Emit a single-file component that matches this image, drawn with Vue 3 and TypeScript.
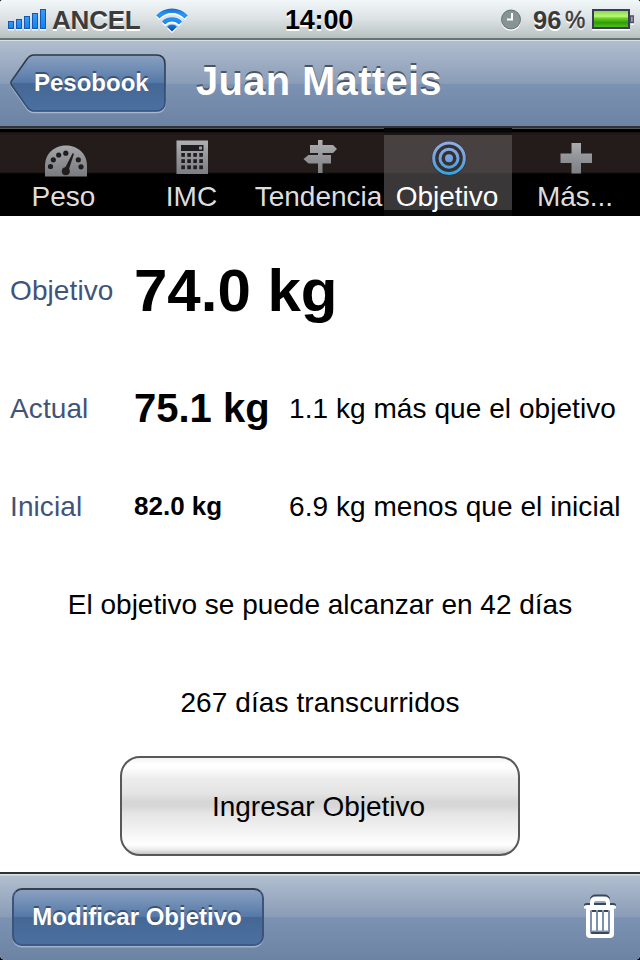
<script setup lang="ts">
interface Tab {
  id: string
  label: string
}

interface Measure {
  label: string
  value: string
  size: string
  note?: string
}

const tabs: Tab[] = [
  { id: 'peso', label: 'Peso' },
  { id: 'imc', label: 'IMC' },
  { id: 'tendencia', label: 'Tendencia' },
  { id: 'objetivo', label: 'Objetivo' },
  { id: 'mas', label: 'Más...' },
]
const selected = 'objetivo'

const measures: Measure[] = [
  { label: 'Objetivo', value: '74.0 kg', size: 'large' },
  { label: 'Actual', value: '75.1 kg', size: 'medium', note: '1.1 kg más que el objetivo' },
  { label: 'Inicial', value: '82.0 kg', size: 'small', note: '6.9 kg menos que el inicial' },
]

const messages: string[] = ['El objetivo se puede alcanzar en 42 días', '267 días transcurridos']

const bars = [7, 9, 12, 15, 19]
const dots: [number, number][] = [
  [50.5, 38.5], [53.3, 31.8], [58.7, 27], [65.8, 25.2], [78.3, 31.8], [81, 38.8],
]
</script>

<template>
  <div class="screen">
    <header class="status">
      <div class="status-left">
        <svg class="signal" width="42" height="24" viewBox="0 0 42 24">
          <defs>
            <linearGradient id="sig" x1="0" y1="0" x2="0" y2="1">
              <stop offset="0" stop-color="#3c9cf2" />
              <stop offset="1" stop-color="#0b84f4" />
            </linearGradient>
          </defs>
          <rect v-for="(h, i) in bars" :key="'s' + i" :x="i * 8" y="20" width="6" height="2.4" fill="#fff" />
          <rect v-for="(h, i) in bars" :key="i" :x="i * 8 + 0.5" :y="20.5 - h" width="5" :height="h" fill="url(#sig)" stroke="#1656b4" />
        </svg>
        <span class="carrier">ANCEL</span>
        <svg class="wifi" width="34" height="26" viewBox="0 0 34 26">
          <defs>
            <linearGradient id="wf" gradientUnits="userSpaceOnUse" x1="0" y1="0" x2="0" y2="24">
              <stop offset="0" stop-color="#1466c6" />
              <stop offset="0.25" stop-color="#2a95f4" />
              <stop offset="0.65" stop-color="#158cf6" />
              <stop offset="1" stop-color="#0939a5" />
            </linearGradient>
            <path id="wifi-shape" d="M1.2 7.2A22 22 0 0 1 32.8 7.2L29.6 10.4A17.4 17.4 0 0 0 4.4 10.4ZM7 13.4A14 14 0 0 1 27 13.4L24 16.6A9.6 9.6 0 0 0 10 16.6ZM12 18.8A6.8 6.8 0 0 1 22 18.8L17 23.4Z" />
          </defs>
          <use href="#wifi-shape" y="1.6" fill="#fff" />
          <use href="#wifi-shape" fill="url(#wf)" />
        </svg>
      </div>
      <span class="time">14:00</span>
      <div class="status-right">
        <svg class="clock" width="22" height="22" viewBox="0 0 22 22">
          <circle cx="11" cy="12" r="9.8" fill="#fff" />
          <circle cx="11" cy="10.5" r="9.5" fill="#879494" stroke="#66706f" />
          <path d="M12 4V10.5H7" fill="none" stroke="#fff" stroke-width="2" />
        </svg>
        <span class="charge">96</span>
        <span class="percent">%</span>
        <svg class="battery" width="43" height="23" viewBox="0 0 43 23">
          <defs>
            <linearGradient id="bat" x1="0" y1="0" x2="0" y2="1">
              <stop offset="0" stop-color="#7ed73b" />
              <stop offset="0.35" stop-color="#b9f77d" />
              <stop offset="0.45" stop-color="#6fd322" />
              <stop offset="0.7" stop-color="#2f9c0a" />
              <stop offset="1" stop-color="#58c81c" />
            </linearGradient>
          </defs>
          <path d="M0 20.8H38" stroke="#fff" stroke-width="1.6" />
          <path d="M39 15.2H42" stroke="#fff" stroke-width="1.6" />
          <rect x="1" y="1" width="36" height="18" fill="url(#bat)" stroke="#3a3b58" stroke-width="2" />
          <rect x="38.6" y="7" width="2.6" height="6.4" fill="#c7ced4" stroke="#4e506a" stroke-width="1.5" />
        </svg>
      </div>
    </header>

    <nav class="navbar">
      <button class="back">
        <svg class="back-shape" width="160" height="62" viewBox="0 0 160 62">
          <defs>
            <linearGradient id="bk" x1="0" y1="0" x2="0" y2="1">
              <stop offset="0" stop-color="#8aa1c1" />
              <stop offset="0.5" stop-color="#5578a8" />
              <stop offset="0.51" stop-color="#456795" />
              <stop offset="1" stop-color="#4b70a0" />
            </linearGradient>
            <linearGradient id="bk-edge" x1="0" y1="0" x2="0" y2="1">
              <stop offset="0" stop-color="#2d3642" />
              <stop offset="1" stop-color="#34547f" />
            </linearGradient>
            <path id="back-path" d="M24 1H146Q155 1 155 10V48Q155 57 146 57H24Q20 57 17 53L1.5 31Q0.3 29 1.5 27L17 5Q20 1 24 1Z" />
          </defs>
          <use href="#back-path" y="1.6" fill="none" stroke="#a9b8cd" stroke-width="1.5" />
          <use href="#back-path" fill="url(#bk)" stroke="url(#bk-edge)" stroke-width="1.6" />
        </svg>
        <span class="back-label">Pesobook</span>
      </button>
      <h1 class="title">Juan Matteis</h1>
    </nav>

    <div class="tabs">
      <div v-for="tab in tabs" :key="tab.id" class="tab" :class="{ active: tab.id === selected }">
        <svg class="tab-icon" width="128" height="50" viewBox="0 0 128 50">
          <defs>
            <linearGradient :id="'g-' + tab.id" gradientUnits="userSpaceOnUse" x1="0" y1="12" x2="0" y2="48">
              <stop offset="0" :stop-color="tab.id === selected ? '#92aee6' : '#b0b1b5'" />
              <stop offset="0.45" :stop-color="tab.id === selected ? '#7ba2df' : '#95969a'" />
              <stop offset="1" :stop-color="tab.id === selected ? '#2ea2e4' : '#7b7c81'" />
            </linearGradient>
          </defs>
          <template v-if="tab.id === 'peso'">
            <path d="M45 48.5V38C45 10.5 87 10.5 87 38V48.5Z" :fill="`url(#g-${tab.id})`" />
            <circle v-for="(d, i) in dots" :key="i" :cx="d[0]" :cy="d[1]" r="2.6" fill="#211c1d" />
            <circle cx="65.8" cy="43.2" r="4" fill="#211c1d" />
            <path d="M64.5 41L72.6 25.2L74 25.8L68.7 42Z" fill="#211c1d" />
          </template>
          <template v-else-if="tab.id === 'imc'">
            <rect x="48.5" y="12.5" width="31.5" height="33.5" :fill="`url(#g-${tab.id})`" />
            <rect x="53" y="17" width="22.5" height="6" fill="#211c1d" />
            <rect x="71" y="18.5" width="3" height="3" fill="#9b9ca0" />
            <template v-for="r in 3" :key="r">
              <rect v-for="c in 4" :key="c" :x="47.3 + c * 6" :y="18.8 + r * 6.2" width="3.6" height="3.8" fill="#211c1d" />
            </template>
          </template>
          <path v-else-if="tab.id === 'tendencia'" d="M62 12H66.5V17H77L81 21L77 25H66.5V27H75V35.5H66.5V45H62V35.5H52.5L47.5 31L52.5 27H62V25H54V17H62Z" :fill="`url(#g-${tab.id})`" />
          <template v-else-if="tab.id === 'objetivo'">
            <circle cx="65" cy="30.5" r="17.5" fill="#343131" />
            <g fill="none" :stroke="`url(#g-${tab.id})`" stroke-width="3">
              <circle cx="65" cy="30.2" r="15.3" />
              <circle cx="65" cy="30.2" r="9" />
            </g>
            <circle cx="65" cy="30.2" r="4" :fill="`url(#g-${tab.id})`" />
          </template>
          <path v-else d="M59.5 15H69V25.5H80V35H69V45.5H59.5V35H48.5V25.5H59.5Z" :fill="`url(#g-${tab.id})`" />
        </svg>
        <span class="tab-label" :class="'label-' + tab.id">{{ tab.label }}</span>
      </div>
    </div>

    <main class="content">
      <section v-for="m in measures" :key="m.label" class="row" :class="'row-' + m.size">
        <span class="label">{{ m.label }}</span>
        <strong class="value" :class="m.size">{{ m.value }}</strong>
        <span v-if="m.note" class="note">{{ m.note }}</span>
      </section>
      <p v-for="(t, i) in messages" :key="t" class="message" :class="'message-' + i">{{ t }}</p>
      <button class="enter">Ingresar Objetivo</button>
    </main>

    <footer class="toolbar">
      <button class="modify">Modificar Objetivo</button>
      <svg class="trash" width="32" height="44" viewBox="0 0 32 44">
        <defs>
          <g id="bin">
            <path d="M0 13Q0 11 3 11H6V8Q6 2.5 12 2.5H20Q26 2.5 26 8V11H29Q32 11 32 13V14.5H0ZM10 11H22V8.5Q22 7 20 7H12Q10 7 10 8.5Z" fill-rule="evenodd" />
            <path d="M2 13H30V40Q30 44 26 44H6Q2 44 2 40ZM6 17V38Q6 40 8 40H24Q26 40 26 38V17Q26 16 25 16H7Q6 16 6 17Z" fill-rule="evenodd" />
            <path d="M8 18H12V36.5H8ZM14 18H18V36.5H14ZM20 18H24V36.5H20Z" />
          </g>
        </defs>
        <use href="#bin" y="-2" fill="#3a4758" />
        <path d="M6 17H26V40H6Z" fill="#7d92b0" />
        <path d="M8 16H12V18H8ZM14 16H18V18H14ZM20 16H24V18H20ZM7 38H25V40H7Z" fill="#3a4758" />
        <use href="#bin" fill="#fff" />
      </svg>
    </footer>
  </div>
</template>

<style>
body {
  margin: 0;
  background: #000;
}
</style>

<style scoped>
.screen {
  width: 640px;
  height: 960px;
  display: flex;
  flex-direction: column;
  overflow: hidden;
  border-radius: 3px 3px 5px 5px;
  background: #fff;
  font-family: "Liberation Sans", Arial, sans-serif;
  color: #000;
}

button {
  margin: 0;
  padding: 0;
  border: 0;
  background: none;
  font-family: inherit;
  color: #000;
}

.status {
  box-sizing: border-box;
  height: 40px;
  display: grid;
  grid-template-columns: 1fr auto 1fr;
  background: linear-gradient(#f2f8fa, #dce2e4 50%, #b8c0c0);
  border-bottom: 2px solid #677372;
  font-weight: bold;
  line-height: 40px;
}

.status-left,
.status-right {
  display: flex;
  align-items: flex-start;
  white-space: nowrap;
}

.status-left {
  padding-left: 8px;
}

.status-right {
  justify-content: flex-end;
  padding-right: 5px;
}

.signal {
  margin-top: 8px;
}

.carrier {
  margin-left: 2px;
  width: 88px;
  font-size: 26px;
  letter-spacing: -0.2px;
  color: #3c3c3c;
  text-shadow: 0 1.5px 0 #fff;
}

.wifi {
  margin: 8px 0 0 15px;
}

.time {
  padding-right: 2px;
  font-size: 27px;
  letter-spacing: -0.2px;
  text-shadow: 0 1.5px 0 #fff;
}

.clock {
  margin: 9px 11px 0 0;
}

.charge {
  width: 29px;
  font-size: 25.5px;
  color: #3a3a3a;
  text-shadow: 0 1.5px 0 #fff;
}

.percent {
  width: 22px;
  margin-left: 3px;
  font-size: 24px;
  font-weight: normal;
  -webkit-text-stroke: 0.5px #3a3a3a;
  color: #3a3a3a;
  text-shadow: 0 1.5px 0 #fff;
  transform: scaleX(0.95);
  transform-origin: left;
}

.battery {
  margin: 9px 0 0 5px;
}

.navbar {
  box-sizing: border-box;
  height: 88px;
  display: flex;
  background: linear-gradient(#b1becf, #8a9cb7 50%, #7c92b2 51%, #6d83a3);
  border-top: 1px solid #dadfe4;
  border-bottom: 2px solid #2d3236;
}

.back {
  display: grid;
  width: 160px;
  height: 62px;
  margin: 13px 0 0 10px;
}

.back-shape,
.back-label {
  grid-area: 1 / 1;
}

.back-label {
  padding-left: 24px;
  text-align: left;
  font-size: 24px;
  font-weight: bold;
  line-height: 58px;
  color: #fff;
  text-shadow: 0 -2px 0 #3b5270;
}

.title {
  margin: 0 0 0 26px;
  font-size: 40px;
  font-weight: bold;
  letter-spacing: 0.3px;
  line-height: 80px;
  color: #fff;
  text-shadow: 0 -2px 0 #4b5664;
  white-space: nowrap;
}

.tabs {
  display: flex;
  height: 88px;
  background: linear-gradient(#555 0 1px, #000 1px 4px, #1a1313 4px, #241c1b 7px 44px, #120e0e 45px, #000 46px);
}

.tab {
  display: flex;
  flex-direction: column;
  align-items: center;
  width: 128px;
  height: 88px;
  color: #ddd;
}

.tab.active {
  color: #fff;
  background: linear-gradient(#060606 0 4px, #1a1616 5px 6.5px, #474241 7px 44px, #393738 46px 82px, #090909 82.5px);
}

.tab-icon {
  flex: none;
}

.tab-label {
  padding-right: 2px;
  font-size: 28px;
  line-height: 37px;
  white-space: nowrap;
}

.label-peso,
.label-imc {
  padding-right: 1px;
}

.label-tendencia {
  padding-right: 3px;
}

.content {
  box-sizing: border-box;
  flex: 1;
  display: flex;
  flex-direction: column;
  align-items: center;
  padding-top: 5px;
  font-size: 28px;
}

.row {
  box-sizing: border-box;
  width: 640px;
  height: 98px;
  padding-left: 10px;
  display: grid;
  grid-template-columns: 124px 155px 1fr;
  align-items: center;
  white-space: nowrap;
}

.row-large {
  height: 138px;
}

.label {
  padding-top: 2px;
  color: #42537a;
  letter-spacing: 0.1px;
}

.large {
  font-size: 60px;
}

.medium {
  font-size: 40px;
}

.small {
  font-size: 26px;
}

.note {
  padding-top: 2px;
  letter-spacing: 0.06px;
}

.message {
  margin: 0;
  height: 98px;
  line-height: 100px;
}

.message-1 {
  letter-spacing: 0.1px;
}

.enter {
  box-sizing: border-box;
  width: 400px;
  height: 100px;
  margin-top: 5px;
  padding: 2px 3px 0 0;
  border: 2px solid #58585a;
  border-radius: 20px;
  font-size: 28px;
  background: linear-gradient(#f4f4f4, #fff 7%, #fff 9%, #ececec 22%, #e4e4e4 37%, #d5d5d5 46%, #d8d8d8 51%, #e5e5e5 58%, #f1f1f1 74%, #fff 90%, #eee 95%, #c6c6c6);
}

.toolbar {
  box-sizing: border-box;
  height: 88px;
  display: flex;
  justify-content: space-between;
  padding: 14px 24px 0 12px;
  border-top: 2px solid #2d3236;
  background: linear-gradient(#dadfe4 0 1px, #b1becf 2px, #8a9cb7 50%, #7c92b2 51%, #6d83a3);
}

.modify {
  box-sizing: border-box;
  width: 252px;
  height: 58px;
  padding-right: 2px;
  border: 2px solid;
  border-color: #353f4d #3c547a #3a5a88;
  border-radius: 10px;
  background: linear-gradient(#8aa1c1, #5578a8 50%, #456795 51%, #4b70a0);
  box-shadow: 0 1.5px 0 #a3b2c8;
  font-size: 24px;
  font-weight: bold;
  line-height: 54px;
  color: #fff;
  text-shadow: 0 -2px 0 #3b5270;
}

.trash {
  margin-top: 6px;
  overflow: visible;
}
</style>
